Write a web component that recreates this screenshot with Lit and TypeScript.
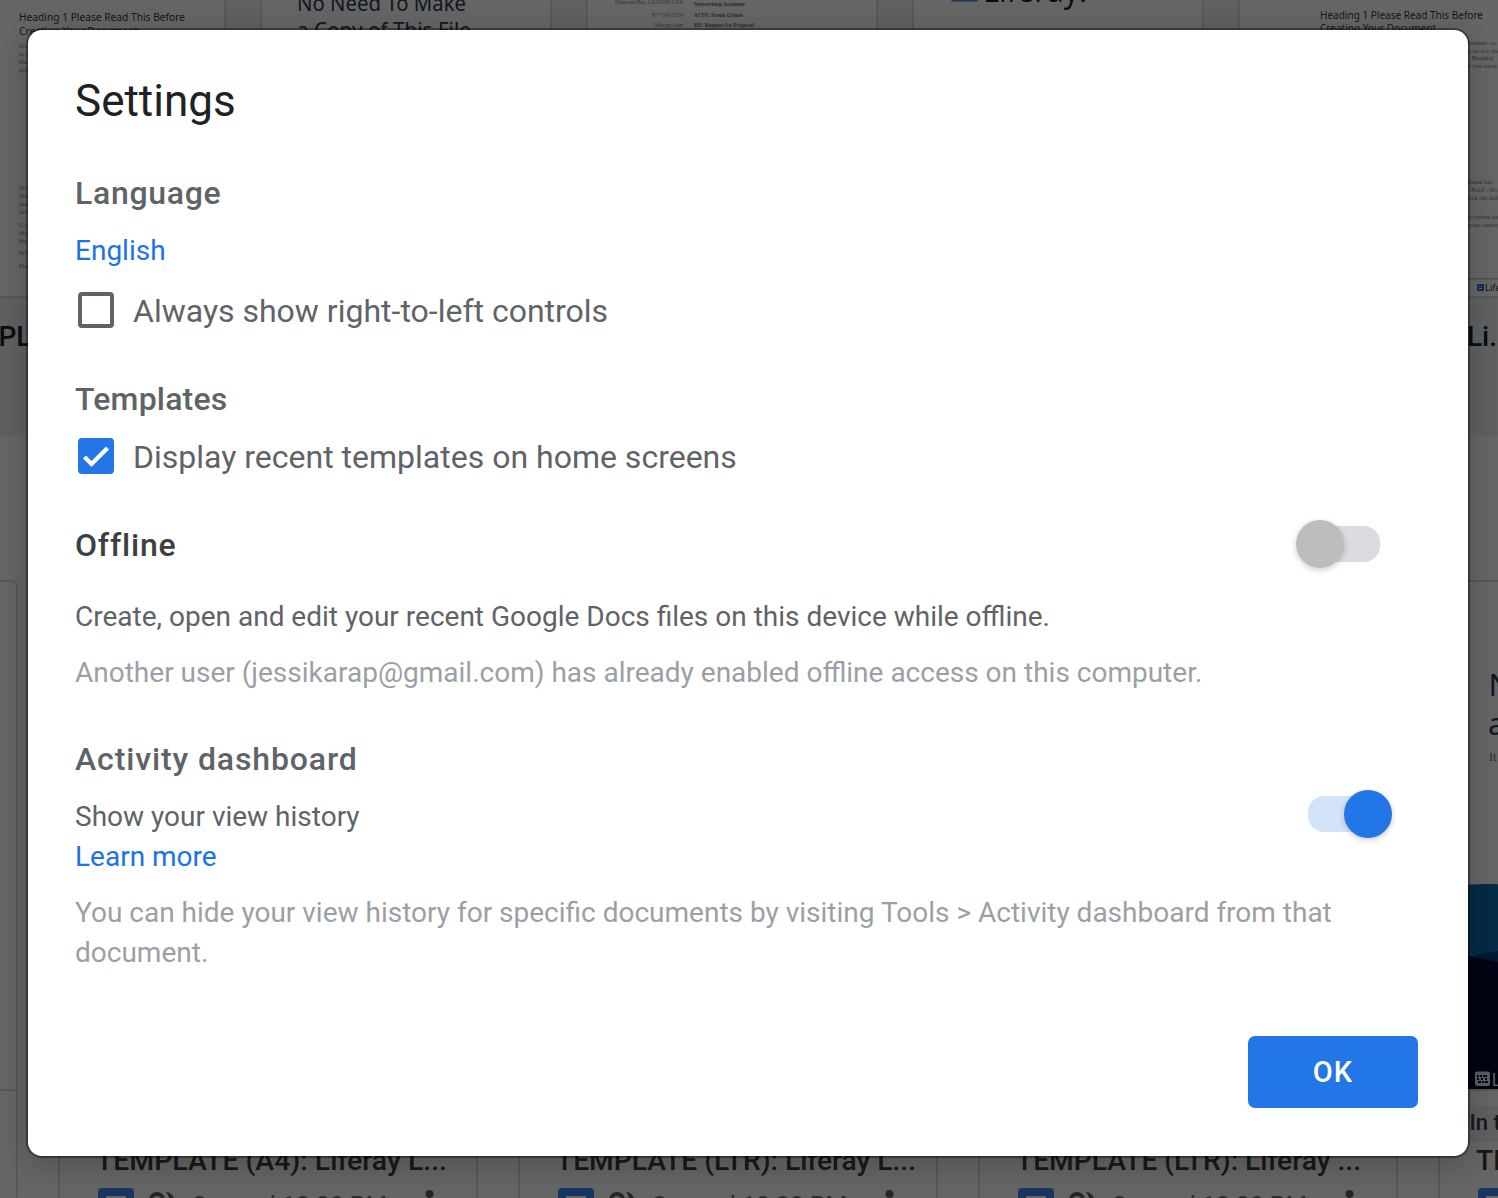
import { LitElement, html, css, svg } from "lit";
import { customElement, property } from "lit/decorators.js";
import { classMap } from "lit/directives/class-map.js";

type Line = { x: number; y: number; text: string; width?: number; size: number; cls: string; end?: boolean };

const line = (l: Line) => svg`<text class=${l.cls} x=${l.x} y=${l.y} font-size=${l.size}
  text-anchor=${l.end ? "end" : "start"}
  textLength=${l.width ?? 0} lengthAdjust="spacingAndGlyphs">${l.text}</text>`;

const plain = (l: Line) => svg`<text class=${l.cls} x=${l.x} y=${l.y} font-size=${l.size}>${l.text}</text>`;

@customElement("toggle-switch")
class ToggleSwitch extends LitElement {
  @property({ type: Boolean }) on = false;

  static styles = css`
    :host { display: block; flex: none; }
    .switch { display: flex; align-items: center; box-sizing: border-box; width: 96px; height: 48px; padding: 0 12px; }
    .track { display: flex; align-items: center; width: 72px; height: 36px; border-radius: 16px; background: #dadce0; }
    .knob { flex: none; width: 48px; height: 48px; margin-left: -12px; border-radius: 50%; background: #bdbdbd; box-shadow: 0 2px 6px rgba(0, 0, 0, 0.2); }
    .on .track { background: #d3e3fa; justify-content: flex-end; }
    .on .knob { margin: 0 -12px 0 0; background: #2276e7; }
  `;

  render() {
    return html`<div class=${classMap({ switch: true, on: this.on })} role="switch" aria-checked=${String(this.on)}>
      <div class="track"><div class="knob"></div></div>
    </div>`;
  }
}

@customElement("check-option")
class CheckOption extends LitElement {
  @property({ type: Boolean }) checked = false;

  static styles = css`
    .row { display: flex; align-items: center; gap: 19px; height: 36px; padding-left: 3px; }
    .box { flex: none; box-sizing: border-box; width: 36px; height: 36px; border: 4px solid #5f6368; border-radius: 4px; }
    .box svg { display: none; }
    .checked .box { border: 0; background: #2276e7; }
    .checked .box svg { display: block; }
    .label { font: 400 32px/36px Roboto, sans-serif; color: #5f6368; white-space: nowrap; padding-top: 2px; }
  `;

  render() {
    return html`<div class=${classMap({ row: true, checked: this.checked })}>
      <div class="box">
        <svg width="36" height="36" viewBox="0 0 36 36">
          <path d="M6.5 19 L13.5 26 L29.5 10" fill="none" stroke="#fff" stroke-width="4.2" />
        </svg>
      </div>
      <span class="label"><slot></slot></span>
    </div>`;
  }
}

@customElement("docs-home")
class DocsHome extends LitElement {
  static styles = css`
    :host { display: block; }
    .home { display: flex; flex-direction: column; width: 1498px; height: 1198px; overflow: hidden; background: #fff; }
    .strip { flex: none; display: flex; gap: 34px; height: 436px; margin-left: -66px; background: #f1f3f4; }
    .template { flex: none; width: 292px; }
    .thumb { box-sizing: border-box; height: 298px; border: solid #dadce0; border-width: 0 2px 2px; background: #fff; overflow: hidden; }
    .thumb svg { display: block; margin-left: -2px; }
    .name { font: 500 28px/40px Roboto, sans-serif; fill: #202124; }
    .files { flex: none; display: flex; gap: 40px; margin: 144px 0 0 -402px; }
    .file { flex: none; box-sizing: border-box; width: 420px; height: 700px; border: 2px solid #dadce0; border-radius: 6px; overflow: hidden; }
    .preview { height: 507px; border-bottom: 2px solid #dadce0; }
    .preview svg, .meta { display: block; }
    .heading { font-family: "Noto Sans", sans-serif; fill: #2c3a58; }
    .serif { font-family: "Liberation Serif", serif; fill: #777c88; }
    .strong { font-family: "Liberation Serif", serif; font-weight: 700; fill: #686c74; }
    .dark { font-family: "Open Sans", sans-serif; fill: #1a1f28; }
    .title { font-family: Roboto, sans-serif; font-weight: 500; fill: #3c4043; }
    .opened { font-family: Roboto, sans-serif; fill: #777; }
    .white { font-family: "Open Sans", sans-serif; fill: #fff; }
  `;

  private firstThumb() {
    const rows: [number, string][] = [
      [48, "Go to File > Make a copy"], [56, "to create a document"], [64, "the headings and text"], [72, "styles that you need"],
      [190, "When using the menu bar"], [198, "Instead of Bold, please"], [206, "use the styles in the"], [214, "button or click the"],
      [227, "Go to the return key"], [235, "block your cursor to"], [243, "the next line"], [255, "When you are done"], [268, "Please delete this"],
    ];
    return svg`
      ${line({ x: 84, y: 21, text: "Heading 1 Please Read This Before", width: 166, size: 11, cls: "heading" })}
      ${line({ x: 84, y: 35, text: "Creating Your Document", width: 119, size: 11, cls: "heading" })}
      ${rows.map(([y, text]) => plain({ x: 84, y, text, size: 6.5, cls: "serif" }))}`;
  }

  private lastThumb() {
    const rows: [number, number, string][] = [
      [229, 45, "cument, so as"], [229, 53, "e do not alter"], [229, 60, ". Heading"], [229, 68, "e you need:"],
      [229, 184, "menu bar."], [232, 192, "Bold\". Do"], [229, 200, "lick the italic"],
      [229, 219, "ur return key"], [229, 227, "your cursor to"],
    ];
    return svg`
      ${line({ x: 81, y: 19, text: "Heading 1 Please Read This Before", width: 163, size: 11, cls: "heading" })}
      ${line({ x: 81, y: 32, text: "Creating Your Document", width: 116, size: 11, cls: "heading" })}
      ${rows.map(([x, y, text]) => plain({ x, y, text, size: 6.5, cls: "serif" }))}
      <rect x="0" y="278" width="290" height="1.5" fill="#c4c6ca" />
      <rect x="238" y="284" width="7" height="7" rx="1" fill="#2a6fd6" />
      <path d="M240 286h1v1h-1zM242 286h1v1h-1zM240 288h3v1h-3z" fill="#fff" />
      ${plain({ x: 246, y: 291, text: "Liferay", size: 9.5, cls: "dark" })}`;
  }

  private thumb(index: number) {
    switch (index) {
      case 0: return this.firstThumb();
      case 1: return svg`
        ${line({ x: 36, y: 11, text: "No Need To Make", width: 169, size: 21, cls: "heading" })}
        ${line({ x: 36, y: 38, text: "a Copy of This File", width: 174, size: 21, cls: "heading" })}`;
      case 2: return svg`
        ${line({ x: 96, y: 4, text: "Diamond Bar, CA 91765 USA", width: 68, size: 6, cls: "serif", end: true })}
        ${line({ x: 96, y: 16.5, text: "877-543-3729", width: 31, size: 6, cls: "serif", end: true })}
        ${line({ x: 96, y: 27, text: "liferay.com", width: 28, size: 6, cls: "serif", end: true })}
        ${line({ x: 107, y: 6, text: "Networking Academy", width: 51, size: 6, cls: "strong" })}
        ${line({ x: 107, y: 16.5, text: "ATTN: Frank Grimes", width: 49, size: 6, cls: "strong" })}
        ${line({ x: 107, y: 27, text: "RE: Request for Proposal", width: 60, size: 6, cls: "strong" })}`;
      case 3: return svg`
        <rect x="38" y="-20" width="27" height="21.5" rx="2" fill="#4a86e8" />
        ${line({ x: 70, y: 2, text: "Liferay.", width: 104, size: 34, cls: "dark" })}`;
      default: return this.lastThumb();
    }
  }

  private name(index: number) {
    if (index !== 0 && index !== 4) return "";
    return html`<svg class="meta" width="292" height="80" viewBox="-1 298 292 80">
      ${index === 0
        ? svg`<text class="name" x="63.5" y="346">PLATE</text>`
        : svg`<text class="name" x="228" y="346">Li...</text>`}
    </svg>`;
  }

  private file(title: string, width: number, last: boolean) {
    return html`<div class="file">
      <div class="preview">
        ${last ? html`<svg width="416" height="507" viewBox="1440 582 416 507">
          ${plain({ x: 1488.5, y: 696, text: "No Need To Make", size: 31, cls: "heading" })}
          ${plain({ x: 1488, y: 735, text: "a Copy of This File", size: 31, cls: "heading" })}
          ${plain({ x: 1489, y: 761, text: "It is easy", size: 12, cls: "serif" })}
          <path d="M1440 887Q1490 881 1530 887V1089H1440z" fill="#0d6bb0" />
          <path d="M1468 957L1498 951L1540 942V1089H1440z" fill="#02407f" />
          <path d="M1440 949L1468 956L1498 962L1857 1010V1089H1440z" fill="#000b2d" />
          <rect x="1475" y="1071.500" width="15" height="14.500" rx="2" fill="#e8eaed" />
          <path d="M1477 1075h2v2h-2zM1480 1075h2v2h-2zM1483 1075h4v2h-4zM1477 1078h2v2h-2zM1481 1078h2v2h-2zM1485 1078h2v2h-2zM1478 1081h3v2h-3zM1482 1081h2v2h-2zM1485 1081h3v2h-3z" fill="#000b2d" />
          ${plain({ x: 1491.5, y: 1086, text: "Liferay", size: 18, cls: "white" })}
        </svg>` : ""}
      </div>
      <svg class="meta" width="416" height="108" viewBox="2 512 416 108">
        ${last ? svg`<rect x="12" y="527" width="160" height="36" rx="4" fill="#f1f3f4" />
          <text class="title" x="31.5" y="551" font-size="22">In the folder</text>` : ""}
        ${title ? svg`
          ${line({ x: 38, y: 591, text: title, width, size: 28.5, cls: "title" })}
          <rect x="40" y="609" width="36" height="36" rx="4" fill="#4285f4" />
          <rect x="48" y="617" width="20" height="20" fill="#fff" />
          <circle cx="99" cy="621" r="6" fill="none" stroke="#5f6368" stroke-width="4" />
          <path d="M108 613a8 8 0 0 1 0 16a12 12 0 0 0 0 -16z" fill="#5f6368" />
          ${line({ x: 133, y: 634, text: "Opened 12:20 PM", width: 196, size: 24, cls: "opened" })}
          <circle cx="371.500" cy="615" r="4" fill="#5f6368" />` : ""}
      </svg>
    </div>`;
  }

  render() {
    return html`<div class="home" aria-hidden="true">
      <div class="strip">
        ${[0, 1, 2, 3, 4].map((i) => html`<div class="template">
          <div class="thumb"><svg width="292" height="298" viewBox="-1 0 292 298">${this.thumb(i)}</svg></div>
          ${this.name(i)}
        </div>`)}
      </div>
      <div class="files">
        ${this.file("", 0, false)}
        ${this.file("TEMPLATE (A4): Liferay L...", 351, false)}
        ${this.file("TEMPLATE (LTR): Liferay L...", 360, false)}
        ${this.file("TEMPLATE (LTR): Liferay ...", 345, false)}
        ${this.file("TEMPLATE (A4): Liferay L...", 351, true)}
      </div>
    </div>`;
  }
}

@customElement("app-root")
class AppRoot extends LitElement {
  static styles = css`
    :host { display: block; position: relative; width: 1498px; height: 1198px; overflow: hidden; font-family: Roboto, sans-serif; }
    .scrim { position: absolute; inset: 0; background: rgba(0, 0, 0, 0.6); }
    .dialog {
      position: absolute; left: 28px; top: 30px; box-sizing: border-box; width: 1440px; height: 1126px;
      display: flex; flex-direction: column; padding: 47px 50px 48px 47px;
      background: #fff; border-radius: 14px;
      box-shadow: 0 0 0 2px rgba(0, 0, 0, 0.38), 0 8px 32px 4px rgba(0, 0, 0, 0.2);
    }
    h1, h2, p { margin: 0; }
    h1 { font-weight: 400; font-size: 44px; line-height: 48px; color: #202124; margin-bottom: 48px; }
    h2 { font-weight: 500; font-size: 32px; line-height: 40px; letter-spacing: 0.2px; color: #5f6368; white-space: nowrap; }
    p, .link { font-size: 28px; line-height: 40px; color: #5f6368; }
    .link { display: block; color: #1a73e8; }
    .muted { color: #9aa0a6; }
    .language { display: flex; flex-direction: column; margin-bottom: 51px; }
    .language h2 { letter-spacing: 0.7px; }
    .language .link { margin: 18px 0 21px; }
    .templates { display: flex; flex-direction: column; gap: 19px; margin-bottom: 46px; }
    .offline, .activity { width: 1317px; }
    .offline { margin-bottom: 46px; }
    .row { display: flex; justify-content: space-between; align-items: center; }
    .offline .row { margin-bottom: 29px; }
    .offline h2 { color: #3c4043; padding-top: 2px; letter-spacing: 0.8px; }
    .offline .muted { margin-top: 16px; }
    .activity h2 { letter-spacing: 0.87px; }
    .activity .row { align-items: flex-start; margin-top: 18px; }
    .activity toggle-switch { margin-top: -7px; }
    .activity .muted { margin-top: 16px; }
    .ok {
      align-self: flex-end; margin-top: auto; width: 170px; height: 72px; border: 0; border-radius: 7px; padding: 1px 0 0;
      background: #2276e7; color: #fff; font: 500 29px/71px Roboto, sans-serif; letter-spacing: 1.2px;
    }
  `;

  render() {
    return html`
      <docs-home></docs-home>
      <div class="scrim"></div>
      <div class="dialog" role="dialog" aria-label="Settings">
        <h1>Settings</h1>
        <section class="language">
          <h2>Language</h2>
          <a class="link">English</a>
          <check-option>Always show right-to-left controls</check-option>
        </section>
        <section class="templates">
          <h2>Templates</h2>
          <check-option checked>Display recent templates on home screens</check-option>
        </section>
        <section class="offline">
          <div class="row"><h2>Offline</h2><toggle-switch></toggle-switch></div>
          <p>Create, open and edit your recent Google Docs files on this device while offline.</p>
          <p class="muted">Another user (jessikarap@gmail.com) has already enabled offline access on this computer.</p>
        </section>
        <section class="activity">
          <h2>Activity dashboard</h2>
          <div class="row">
            <div><p>Show your view history</p><a class="link">Learn more</a></div>
            <toggle-switch on></toggle-switch>
          </div>
          <p class="muted">You can hide your view history for specific documents by visiting Tools &gt; Activity dashboard from that document.</p>
        </section>
        <button class="ok">OK</button>
      </div>`;
  }
}
